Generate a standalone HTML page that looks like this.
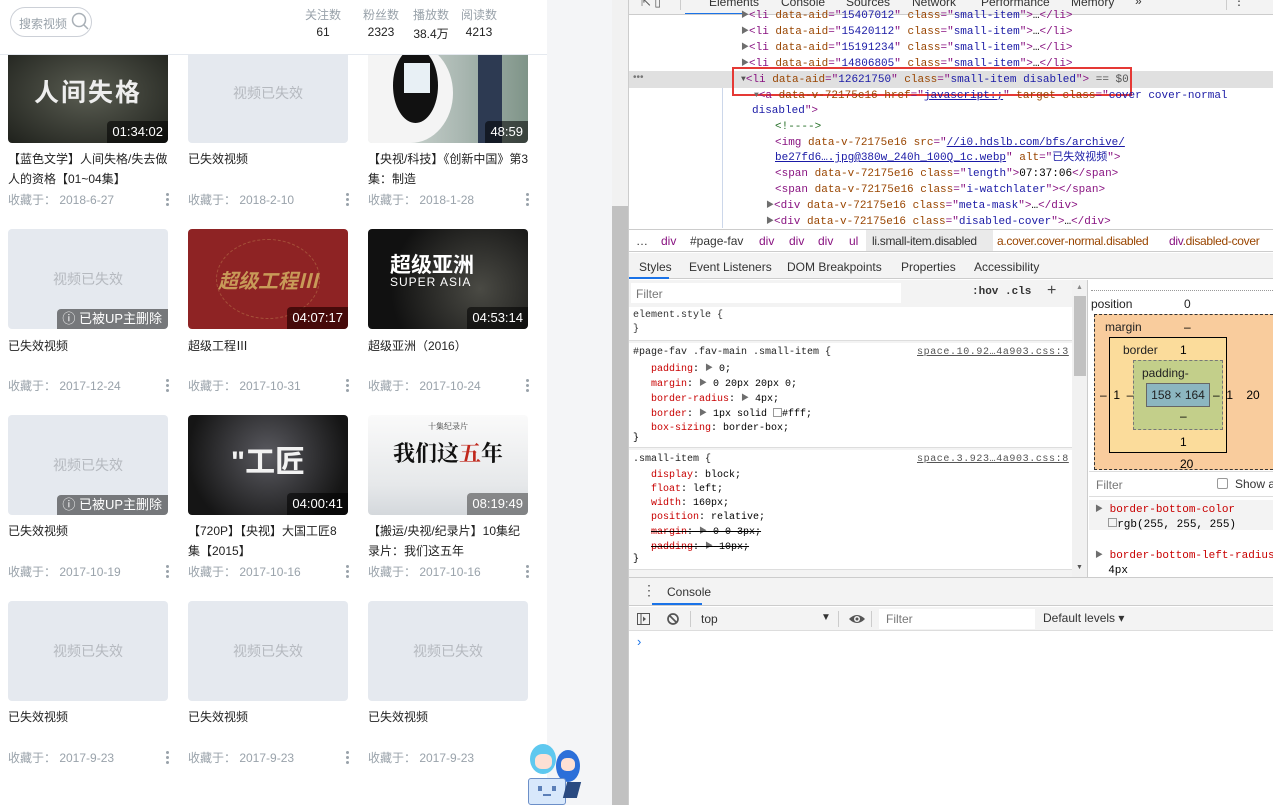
<!DOCTYPE html>
<html><head><meta charset="utf-8"><style>
*{margin:0;padding:0;box-sizing:border-box}
body{width:1273px;height:805px;overflow:hidden;position:relative;background:#fff;font-family:"Liberation Sans","Noto Sans CJK SC",sans-serif;font-size:12px}
.a{position:absolute}
.th{position:absolute;width:160px;height:100px;border-radius:4px;overflow:hidden;background:#e5e9ef}
.dead{color:#b5b9bf;font-size:14px;text-align:center;line-height:100px}
.len{position:absolute;right:0;bottom:0;background:rgba(0,0,0,.55);color:#fff;font-size:13px;padding:0 5px;height:22px;line-height:22px;border-radius:4px 0 0 0}
.del{position:absolute;right:0;bottom:0;background:#76787b;color:#fff;font-size:13px;padding:0 6px 0 5px;height:20px;line-height:20px;border-radius:4px 0 0 0}
.ti{position:absolute;width:160px;color:#222;font-size:12px;line-height:20px}
.dt{position:absolute;color:#99a2aa;font-size:12px;line-height:16px}
.dots{position:absolute;width:4px}
.dots i{display:block;width:3px;height:3px;border-radius:50%;background:#99a2aa;margin-bottom:2px}
.mono{font-family:"Liberation Mono","Noto Sans CJK SC",monospace;font-size:11px;white-space:pre;line-height:16px}
.sm{font-size:10px;line-height:14px}
.tg{color:#881280}.at{color:#994500}.av{color:#1a1aa6}.cm{color:#236e25}.lk{color:#1a1aa6;text-decoration:underline}
.ar{color:#6e6e6e;font-size:8px;vertical-align:1px}
.pr{color:#c80000}
.bc{position:absolute;top:234px;font-size:12px;white-space:nowrap}
.tb{position:absolute;top:-5px;color:#333;font-size:12px}
</style></head><body>

<div class="a" style="left:0;top:0;width:547px;height:805px;background:#fff"></div>
<div class="a" style="left:547px;top:0;width:65px;height:805px;background:#f4f5f7"></div>
<div class="a" style="left:612px;top:0;width:16px;height:805px;background:#f1f1f1"></div>
<div class="a" style="left:612px;top:206px;width:16px;height:599px;background:#c1c1c1"></div>

<!-- row1 -->
<div class="th" style="left:8px;top:43px;background:radial-gradient(ellipse at 50% 50%,#5a5d52,#1f211c)"><div class="a" style="left:0;top:30px;width:160px;text-align:center;color:#eee;font-size:25px;font-weight:bold;letter-spacing:2px">人间失格</div><span class="len">01:34:02</span></div>
<div class="th dead" style="left:188px;top:43px">视频已失效</div>
<div class="th" style="left:368px;top:43px;background:linear-gradient(90deg,#dde3e0,#a8b6b0 60%,#7f9488)"><div class="a" style="left:0;top:0;width:85px;height:100px;border-radius:0 50% 50% 0;background:#f4f4f4"></div><div class="a" style="left:25px;top:5px;width:45px;height:75px;border-radius:50%;background:#111"></div><div class="a" style="left:36px;top:20px;width:26px;height:30px;background:#e8f0f5"></div><div class="a" style="left:110px;top:0;width:24px;height:100px;background:#2d3a52"></div><span class="len">48:59</span></div>
<div class="ti" style="left:8px;top:149px">【蓝色文学】人间失格/失去做人的资格【01~04集】</div>
<div class="ti" style="left:188px;top:149px">已失效视频</div>
<div class="ti" style="left:368px;top:149px">【央视/科技】《创新中国》第3集：制造</div>
<div class="dt" style="left:8px;top:192px">收藏于：&nbsp;2018-6-27</div>
<div class="dt" style="left:188px;top:192px">收藏于：&nbsp;2018-2-10</div>
<div class="dt" style="left:368px;top:192px">收藏于：&nbsp;2018-1-28</div>
<div class="dots" style="left:166px;top:193px"><i></i><i></i><i></i></div>
<div class="dots" style="left:346px;top:193px"><i></i><i></i><i></i></div>
<div class="dots" style="left:526px;top:193px"><i></i><i></i><i></i></div>

<!-- row2 -->
<div class="th dead" style="left:8px;top:229px">视频已失效<span class="del">ⓘ 已被UP主删除</span></div>
<div class="th" style="left:188px;top:229px;background:#8e2324"><div class="a" style="left:28px;top:10px;width:104px;height:80px;border:1px dashed rgba(200,150,90,.4);border-radius:50%"></div><div class="a" style="left:0;top:36px;width:160px;text-align:center;color:#c89a58;font-size:20px;font-weight:bold;font-style:italic">超级工程Ⅲ</div><span class="len" style="background:rgba(40,0,0,.7)">04:07:17</span></div>
<div class="th" style="left:368px;top:229px;background:radial-gradient(circle at 70% 60%,#4a4a44,#111 70%)"><div class="a" style="left:22px;top:20px;color:#fff;font-size:21px;font-weight:bold">超级亚洲</div><div class="a" style="left:22px;top:46px;color:#fff;font-size:12px;letter-spacing:1px">SUPER ASIA</div><span class="len">04:53:14</span></div>
<div class="ti" style="left:8px;top:336px">已失效视频</div>
<div class="ti" style="left:188px;top:336px">超级工程Ⅲ</div>
<div class="ti" style="left:368px;top:336px">超级亚洲（2016）</div>
<div class="dt" style="left:8px;top:378px">收藏于：&nbsp;2017-12-24</div>
<div class="dt" style="left:188px;top:378px">收藏于：&nbsp;2017-10-31</div>
<div class="dt" style="left:368px;top:378px">收藏于：&nbsp;2017-10-24</div>
<div class="dots" style="left:166px;top:379px"><i></i><i></i><i></i></div>
<div class="dots" style="left:346px;top:379px"><i></i><i></i><i></i></div>
<div class="dots" style="left:526px;top:379px"><i></i><i></i><i></i></div>

<!-- row3 -->
<div class="th dead" style="left:8px;top:415px">视频已失效<span class="del">ⓘ 已被UP主删除</span></div>
<div class="th" style="left:188px;top:415px;background:radial-gradient(circle at 50% 40%,#5a5a60,#151515 80%)"><div class="a" style="left:0;top:22px;width:160px;text-align:center;color:#f2f2f2;font-size:30px;font-weight:bold">"工匠</div><span class="len">04:00:41</span></div>
<div class="th" style="left:368px;top:415px;background:linear-gradient(#fafafa,#e6e8ea 70%,#d4d8dc)"><div class="a" style="left:0;top:6px;width:160px;text-align:center;color:#333;font-size:8px;font-family:'Noto Serif CJK SC',serif">十集纪录片</div><div class="a" style="left:25px;top:22px;color:#111;font-size:22px;font-weight:bold;font-family:'Noto Serif CJK SC',serif">我们这<span style="color:#c0281c">五</span>年</div><span class="len" style="background:rgba(60,60,60,.55)">08:19:49</span></div>
<div class="ti" style="left:8px;top:521px">已失效视频</div>
<div class="ti" style="left:188px;top:521px">【720P】【央视】大国工匠8集【2015】</div>
<div class="ti" style="left:368px;top:521px">【搬运/央视/纪录片】10集纪录片：我们这五年</div>
<div class="dt" style="left:8px;top:564px">收藏于：&nbsp;2017-10-19</div>
<div class="dt" style="left:188px;top:564px">收藏于：&nbsp;2017-10-16</div>
<div class="dt" style="left:368px;top:564px">收藏于：&nbsp;2017-10-16</div>
<div class="dots" style="left:166px;top:565px"><i></i><i></i><i></i></div>
<div class="dots" style="left:346px;top:565px"><i></i><i></i><i></i></div>
<div class="dots" style="left:526px;top:565px"><i></i><i></i><i></i></div>

<!-- row4 -->
<div class="th dead" style="left:8px;top:601px">视频已失效</div>
<div class="th dead" style="left:188px;top:601px">视频已失效</div>
<div class="th dead" style="left:368px;top:601px">视频已失效</div>
<div class="ti" style="left:8px;top:707px">已失效视频</div>
<div class="ti" style="left:188px;top:707px">已失效视频</div>
<div class="ti" style="left:368px;top:707px">已失效视频</div>
<div class="dt" style="left:8px;top:750px">收藏于：&nbsp;2017-9-23</div>
<div class="dt" style="left:188px;top:750px">收藏于：&nbsp;2017-9-23</div>
<div class="dt" style="left:368px;top:750px">收藏于：&nbsp;2017-9-23</div>
<div class="dots" style="left:166px;top:751px"><i></i><i></i><i></i></div>
<div class="dots" style="left:346px;top:751px"><i></i><i></i><i></i></div>

<!-- header -->
<div class="a" style="left:0;top:0;width:547px;height:55px;background:#fff;border-bottom:1px solid #e5e9ef"></div>
<div class="a" style="left:10px;top:7px;width:82px;height:30px;border:1px solid #ccd0d7;border-radius:15px"></div>
<div class="a" style="left:19px;top:15px;color:#99a2aa;font-size:12px">搜索视频</div>
<svg class="a" style="left:71px;top:12px" width="20" height="20" viewBox="0 0 20 20"><circle cx="8" cy="8" r="6.5" fill="none" stroke="#a9b0b7" stroke-width="1.5"/><line x1="12.8" y1="12.8" x2="17" y2="17" stroke="#a9b0b7" stroke-width="1.5"/></svg>
<div class="a" style="left:298px;top:6px;width:50px;text-align:center;color:#99a2aa;font-size:12px">关注数</div>
<div class="a" style="left:356px;top:6px;width:50px;text-align:center;color:#99a2aa;font-size:12px">粉丝数</div>
<div class="a" style="left:406px;top:6px;width:50px;text-align:center;color:#99a2aa;font-size:12px">播放数</div>
<div class="a" style="left:454px;top:6px;width:50px;text-align:center;color:#99a2aa;font-size:12px">阅读数</div>
<div class="a" style="left:298px;top:25px;width:50px;text-align:center;color:#222;font-size:12px">61</div>
<div class="a" style="left:356px;top:25px;width:50px;text-align:center;color:#222;font-size:12px">2323</div>
<div class="a" style="left:406px;top:25px;width:50px;text-align:center;color:#222;font-size:12px">38.4万</div>
<div class="a" style="left:454px;top:25px;width:50px;text-align:center;color:#222;font-size:12px">4213</div>

<!-- mascot -->
<div class="a" style="left:526px;top:740px;width:64px;height:65px">
<div class="a" style="left:4px;top:4px;width:26px;height:30px;border-radius:50%;background:#5ec8ef"></div>
<div class="a" style="left:9px;top:14px;width:17px;height:15px;border-radius:40%;background:#fde0d4"></div>
<div class="a" style="left:30px;top:10px;width:24px;height:32px;border-radius:50%;background:#2c6fd9"></div>
<div class="a" style="left:35px;top:18px;width:14px;height:13px;border-radius:40%;background:#fde0d4"></div>
<div class="a" style="left:2px;top:38px;width:38px;height:27px;background:#d8e8fb;border:1px solid #6c8fc8;border-radius:3px"></div>
<div class="a" style="left:12px;top:46px;width:4px;height:5px;background:#5b7fb8"></div>
<div class="a" style="left:26px;top:46px;width:4px;height:5px;background:#5b7fb8"></div>
<div class="a" style="left:17px;top:53px;width:8px;height:3px;border-bottom:2px solid #5b7fb8"></div>
<div class="a" style="left:39px;top:42px;width:14px;height:16px;background:#2a4a80;transform:skewX(-15deg)"></div>
</div>

<!-- DEVTOOLS -->
<div class="a" style="left:628px;top:0;width:645px;height:805px;background:#fff;border-left:1px solid #ccc"></div>
<div class="a" style="left:629px;top:0;width:644px;height:15px;background:#f3f3f3;border-bottom:1px solid #ccc;overflow:hidden">
<div class="tb" style="left:12px;color:#555">⇱ ▯</div>
<div class="a" style="left:51px;top:-4px;width:1px;height:14px;background:#ccc"></div>
<div class="tb" style="left:80px">Elements</div>
<div class="a" style="left:56px;top:13px;width:58px;height:2px;background:#1a73e8"></div>
<div class="tb" style="left:152px">Console</div>
<div class="tb" style="left:217px">Sources</div>
<div class="tb" style="left:283px">Network</div>
<div class="tb" style="left:352px">Performance</div>
<div class="tb" style="left:442px">Memory</div>
<div class="tb" style="left:506px;top:-6px">»</div>
<div class="a" style="left:597px;top:-4px;width:1px;height:14px;background:#ccc"></div>
<div class="tb" style="left:604px;top:-6px">⋮</div>
</div>

<!-- elements tree -->
<div class="a" style="left:629px;top:71px;width:644px;height:17px;background:#e0e0e0"></div>
<div class="a" style="left:732px;top:67px;width:400px;height:29px;border:2px solid #e53935"></div>
<div class="a" style="left:633px;top:72px;color:#777;font-size:10px">•••</div>
<div class="a" style="left:722px;top:88px;width:1px;height:140px;background:#ccd7ea"></div>
<div class="a mono" style="left:741px;top:8px"><span class="ar">▶</span><span class="tg">&lt;li</span> <span class="at">data-aid</span><span class="tg">="</span><span class="av">15407012</span><span class="tg">"</span> <span class="at">class</span><span class="tg">="</span><span class="av">small-item</span><span class="tg">"&gt;</span>…<span class="tg">&lt;/li&gt;</span></div>
<div class="a mono" style="left:741px;top:24px"><span class="ar">▶</span><span class="tg">&lt;li</span> <span class="at">data-aid</span><span class="tg">="</span><span class="av">15420112</span><span class="tg">"</span> <span class="at">class</span><span class="tg">="</span><span class="av">small-item</span><span class="tg">"&gt;</span>…<span class="tg">&lt;/li&gt;</span></div>
<div class="a mono" style="left:741px;top:40px"><span class="ar">▶</span><span class="tg">&lt;li</span> <span class="at">data-aid</span><span class="tg">="</span><span class="av">15191234</span><span class="tg">"</span> <span class="at">class</span><span class="tg">="</span><span class="av">small-item</span><span class="tg">"&gt;</span>…<span class="tg">&lt;/li&gt;</span></div>
<div class="a mono" style="left:741px;top:56px;height:14px;overflow:hidden"><span class="ar">▶</span><span class="tg">&lt;li</span> <span class="at">data-aid</span><span class="tg">="</span><span class="av">14806805</span><span class="tg">"</span> <span class="at">class</span><span class="tg">="</span><span class="av">small-item</span><span class="tg">"&gt;</span>…<span class="tg">&lt;/li&gt;</span></div>
<div class="a mono" style="left:741px;top:72px"><span class="ar" style="color:#555">▼</span><span class="tg">&lt;li</span> <span class="at">data-aid</span><span class="tg">="</span><span class="av">12621750</span><span class="tg">"</span> <span class="at">class</span><span class="tg">="</span><span class="av">small-item disabled</span><span class="tg">"&gt;</span> <span style="color:#555">== $0</span></div>
<div class="a mono" style="left:754px;top:88px"><span class="ar">▼</span><span class="tg">&lt;a</span> <span class="at">data-v-72175e16 href</span><span class="tg">="</span><span class="lk">javascript:;</span><span class="tg">"</span> <span class="at">target class</span><span class="tg">="</span><span class="av">cover cover-normal</span></div>
<div class="a mono" style="left:752px;top:103px"><span class="av">disabled</span><span class="tg">"&gt;</span></div>
<div class="a mono" style="left:775px;top:119px"><span class="cm">&lt;!----&gt;</span></div>
<div class="a mono" style="left:775px;top:135px"><span class="tg">&lt;img</span> <span class="at">data-v-72175e16 src</span><span class="tg">="</span><span class="lk">//i0.hdslb.com/bfs/archive/</span></div>
<div class="a mono" style="left:775px;top:150px"><span class="lk">be27fd6….jpg@380w_240h_100Q_1c.webp</span><span class="tg">"</span> <span class="at">alt</span><span class="tg">="</span><span class="av">已失效视频</span><span class="tg">"&gt;</span></div>
<div class="a mono" style="left:775px;top:166px"><span class="tg">&lt;span</span> <span class="at">data-v-72175e16 class</span><span class="tg">="</span><span class="av">length</span><span class="tg">"&gt;</span>07:37:06<span class="tg">&lt;/span&gt;</span></div>
<div class="a mono" style="left:775px;top:182px"><span class="tg">&lt;span</span> <span class="at">data-v-72175e16 class</span><span class="tg">="</span><span class="av">i-watchlater</span><span class="tg">"&gt;&lt;/span&gt;</span></div>
<div class="a mono" style="left:766px;top:198px"><span class="ar">▶</span><span class="tg">&lt;div</span> <span class="at">data-v-72175e16 class</span><span class="tg">="</span><span class="av">meta-mask</span><span class="tg">"&gt;</span>…<span class="tg">&lt;/div&gt;</span></div>
<div class="a mono" style="left:766px;top:214px"><span class="ar">▶</span><span class="tg">&lt;div</span> <span class="at">data-v-72175e16 class</span><span class="tg">="</span><span class="av">disabled-cover</span><span class="tg">"&gt;</span>…<span class="tg">&lt;/div&gt;</span></div>

<!-- breadcrumb -->
<div class="a" style="left:629px;top:229px;width:644px;height:23px;background:#fff;border-top:1px solid #ccc;border-bottom:1px solid #ccc"></div>
<div class="a" style="left:866px;top:230px;width:127px;height:21px;background:#eaeaea"></div>
<div class="bc" style="left:636px;color:#333">…</div>
<div class="bc tg" style="left:661px">div</div>
<div class="bc" style="left:690px;color:#333">#page-fav</div>
<div class="bc tg" style="left:759px">div</div>
<div class="bc tg" style="left:789px">div</div>
<div class="bc tg" style="left:818px">div</div>
<div class="bc tg" style="left:849px">ul</div>
<div class="bc" style="left:872px;color:#333;letter-spacing:-0.3px">li.small-item.disabled</div>
<div class="bc at" style="left:997px;letter-spacing:-0.3px">a.cover.cover-normal.disabled</div>
<div class="bc" style="left:1169px;letter-spacing:-0.3px"><span class="tg">div</span><span class="at">.disabled-cover</span></div>

<!-- styles tabs -->
<div class="a" style="left:629px;top:253px;width:644px;height:26px;background:#f3f3f3;border-bottom:1px solid #ccc"></div>
<div class="a" style="left:639px;top:260px;font-size:12px;color:#333">Styles</div>
<div class="a" style="left:689px;top:260px;font-size:12px;color:#333">Event Listeners</div>
<div class="a" style="left:787px;top:260px;font-size:12px;color:#333">DOM Breakpoints</div>
<div class="a" style="left:901px;top:260px;font-size:12px;color:#333">Properties</div>
<div class="a" style="left:974px;top:260px;font-size:12px;color:#333">Accessibility</div>
<div class="a" style="left:629px;top:277px;width:40px;height:2px;background:#1a73e8"></div>

<!-- styles pane -->
<div class="a" style="left:629px;top:280px;width:443px;height:297px;background:#f3f3f3"></div>
<div class="a" style="left:631px;top:283px;width:270px;height:20px;background:#fff"></div>
<div class="a" style="left:636px;top:287px;color:#777;font-size:12px">Filter</div>
<div class="a" style="left:972px;top:286px;color:#333;font-size:11px;font-family:'Liberation Mono',monospace;font-weight:bold">:hov .cls</div>
<div class="a" style="left:1047px;top:282px;color:#444;font-size:16px">+</div>
<div class="a" style="left:629px;top:307px;width:443px;height:34px;background:#fff;border-bottom:1px solid #ddd"></div>
<div class="a mono sm" style="left:633px;top:309px;color:#333">element.style {
}</div>
<div class="a" style="left:629px;top:343px;width:443px;height:105px;background:#fff;border-bottom:1px solid #ddd"></div>
<div class="a mono sm" style="left:633px;top:346px;color:#222">#page-fav .fav-main .small-item {</div>
<div class="a mono sm" style="left:917px;top:346px;color:#555;text-decoration:underline;letter-spacing:0.6px">space.10.92…4a903.css:3</div>
<div class="a mono sm" style="left:651px;top:362px"><span class="pr">padding</span>: <span class="ar">▶</span> 0;
<span class="pr">margin</span>: <span class="ar">▶</span> 0 20px 20px 0;
<span class="pr">border-radius</span>: <span class="ar">▶</span> 4px;
<span class="pr">border</span>: <span class="ar">▶</span> 1px solid <span style="display:inline-block;width:9px;height:9px;border:1px solid #999;vertical-align:-1px"></span>#fff;
<span class="pr">box-sizing</span>: border-box;</div>
<div class="a mono sm" style="left:633px;top:432px">}</div>
<div class="a" style="left:629px;top:450px;width:443px;height:120px;background:#fff;border-bottom:1px solid #ddd"></div>
<div class="a mono sm" style="left:633px;top:453px;color:#222">.small-item {</div>
<div class="a mono sm" style="left:917px;top:453px;color:#555;text-decoration:underline;letter-spacing:0.6px">space.3.923…4a903.css:8</div>
<div class="a mono sm" style="left:651px;top:469px"><span class="pr">display</span>: block;
<span class="pr">float</span>: left;
<span class="pr">width</span>: 160px;
<span class="pr">position</span>: relative;
<s><span class="pr">margin</span>: <span class="ar">▶</span> 0 0 3px;</s>
<s><span class="pr">padding</span>: <span class="ar">▶</span> 10px;</s></div>
<div class="a mono sm" style="left:633px;top:553px">}</div>
<div class="a" style="left:1072px;top:280px;width:16px;height:297px;background:#f1f1f1;border-right:1px solid #ccc"></div>
<div class="a" style="left:1074px;top:296px;width:12px;height:80px;background:#c1c1c1"></div>
<div class="a" style="left:1076px;top:284px;font-size:7px;color:#888">▲</div>
<div class="a" style="left:1076px;top:564px;font-size:7px;color:#555">▼</div>

<!-- computed pane -->
<div class="a" style="left:1089px;top:280px;width:184px;height:297px;background:#fff;overflow:hidden">
<div class="a" style="left:2px;top:10px;width:182px;border-top:1px dotted #999"></div>
<div class="a" style="left:2px;top:17px;font-size:12px;color:#222">position</div>
<div class="a" style="left:95px;top:17px;font-size:12px;color:#222">0</div>
<div class="a" style="left:5px;top:34px;width:179px;height:156px;background:#f9cc9d;border:1px dashed #333;border-right:none"></div>
<div class="a" style="left:16px;top:40px;font-size:12px;color:#222">margin</div>
<div class="a" style="left:95px;top:40px;font-size:12px">–</div>
<div class="a" style="left:20px;top:57px;width:118px;height:116px;background:#fbdc9b;border:1px solid #000"></div>
<div class="a" style="left:34px;top:63px;font-size:12px;color:#222">border</div>
<div class="a" style="left:91px;top:63px;font-size:12px">1</div>
<div class="a" style="left:44px;top:80px;width:90px;height:70px;background:#c3cf8a;border:1px dashed #777"></div>
<div class="a" style="left:53px;top:86px;font-size:12px;color:#222">padding-</div>
<div class="a" style="left:57px;top:103px;width:64px;height:24px;background:#8cb6c0;border:1px solid #666;text-align:center;line-height:22px;font-size:12px;color:#222">158 × 164</div>
<div class="a" style="left:91px;top:129px;font-size:12px">–</div>
<div class="a" style="left:91px;top:155px;font-size:12px">1</div>
<div class="a" style="left:91px;top:177px;font-size:12px">20</div>
<div class="a" style="left:11px;top:108px;font-size:12px;white-space:pre">–  1  –</div>
<div class="a" style="left:124px;top:108px;font-size:12px;white-space:pre">–  1    20</div>
<div class="a" style="left:0;top:191px;width:184px;height:26px;background:#fff;border-top:1px solid #ddd;border-bottom:1px solid #ddd"></div>
<div class="a" style="left:7px;top:198px;font-size:12px;color:#777">Filter</div>
<div class="a" style="left:128px;top:198px;width:11px;height:11px;border:1px solid #999;border-radius:2px"></div>
<div class="a" style="left:146px;top:197px;font-size:12px;color:#333;white-space:nowrap">Show a</div>
<div class="a" style="left:0;top:220px;width:184px;height:30px;background:#f3f3f3"></div>
<div class="a mono" style="left:6px;top:222px;line-height:15px;font-size:11px;white-space:pre"><span class="ar">▶</span> <span class="pr">border-bottom-color</span>
  <span style="display:inline-block;width:9px;height:9px;border:1px solid #999"></span>rgb(255, 255, 255)

<span class="ar">▶</span> <span class="pr">border-bottom-left-radius</span>
  4px

<span class="ar">▶</span> <span class="pr">border-bottom-right-radius</span></div>
</div>

<!-- console drawer -->
<div class="a" style="left:629px;top:577px;width:644px;height:29px;background:#f3f3f3;border-top:1px solid #ccc;border-bottom:1px solid #ccc"></div>
<div class="a" style="left:642px;top:582px;font-size:14px;color:#555">⋮</div>
<div class="a" style="left:667px;top:585px;font-size:12px;color:#333">Console</div>
<div class="a" style="left:652px;top:603px;width:50px;height:2px;background:#1a73e8"></div>
<div class="a" style="left:629px;top:607px;width:644px;height:24px;background:#f3f3f3;border-bottom:1px solid #ddd"></div>
<svg class="a" style="left:636px;top:611px" width="16" height="16" viewBox="0 0 16 16"><rect x="1.5" y="2.5" width="12" height="11" fill="none" stroke="#555"/><line x1="5" y1="3" x2="5" y2="13" stroke="#555"/><path d="M7 5.5l3 2.5-3 2.5z" fill="#555"/></svg>
<svg class="a" style="left:666px;top:611px" width="16" height="16" viewBox="0 0 16 16"><circle cx="7" cy="8" r="5" fill="none" stroke="#555" stroke-width="1.7"/><line x1="3.5" y1="4.5" x2="10.5" y2="11.5" stroke="#555" stroke-width="1.7"/></svg>
<div class="a" style="left:690px;top:611px;width:1px;height:16px;background:#ccc"></div>
<div class="a" style="left:701px;top:612px;font-size:12px;color:#333">top</div>
<div class="a" style="left:821px;top:612px;font-size:10px;color:#333">▼</div>
<div class="a" style="left:838px;top:611px;width:1px;height:16px;background:#ccc"></div>
<svg class="a" style="left:848px;top:611px" width="18" height="16" viewBox="0 0 18 16"><path d="M1 8 Q9 0 17 8 Q9 16 1 8z" fill="#555"/><circle cx="9" cy="8" r="3" fill="#f3f3f3"/><circle cx="9" cy="8" r="1.5" fill="#555"/></svg>
<div class="a" style="left:871px;top:611px;width:1px;height:16px;background:#ccc"></div>
<div class="a" style="left:879px;top:609px;width:156px;height:20px;background:#fff"></div>
<div class="a" style="left:886px;top:612px;font-size:12px;color:#777">Filter</div>
<div class="a" style="left:1043px;top:611px;font-size:12px;color:#333">Default levels ▾</div>
<div class="a" style="left:637px;top:634px;font-size:13px;color:#1a73e8">›</div>
</body></html>
